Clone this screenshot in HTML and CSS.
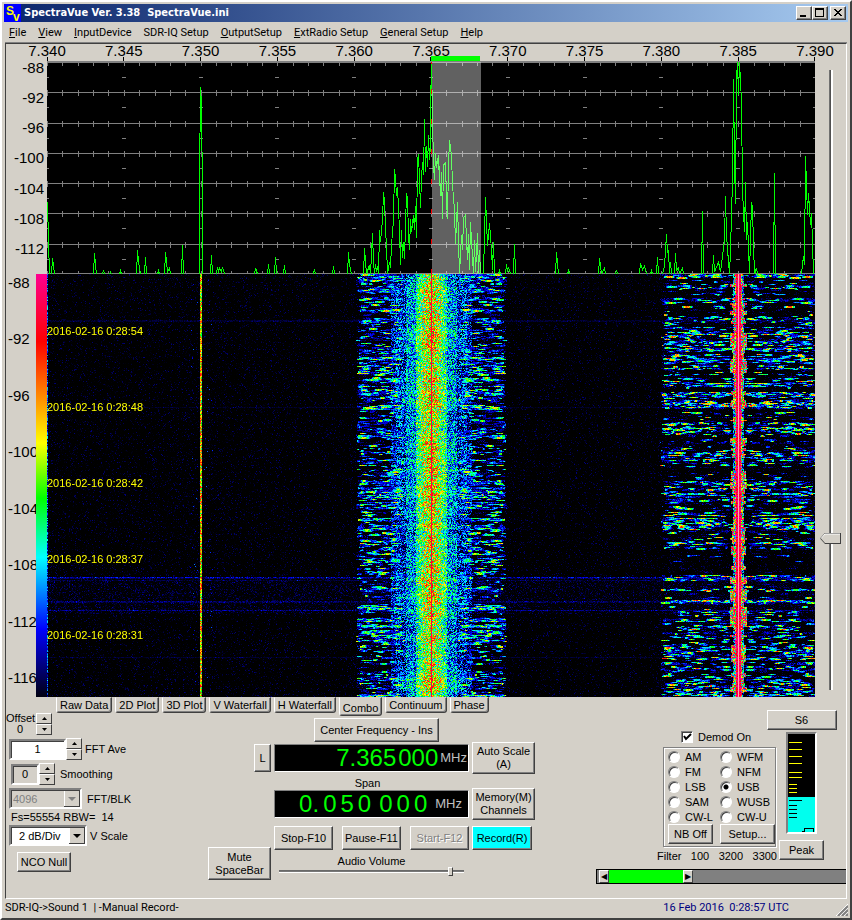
FILE: index.html
```
<!DOCTYPE html>
<html lang="en">
<head>
    <meta charset="UTF-8">
    <meta name="viewport" content="width=device-width, initial-scale=1.0">
    <title>SpectraVue Ver. 3.38</title>
    <link rel="stylesheet" href="styles.css">
</head>
<body>
    <div class="window">
        <header class="title-bar">
            <svg class="app-icon" width="17" height="18" viewBox="0 0 17 18">
                <rect width="17" height="18" fill="#0000ff" />
                <text x="2" y="11" fill="#ffff00" font-size="12">S</text>
                <text x="9" y="17" fill="#ffff00" font-size="12">v</text>
            </svg>
            <h1>SpectraVue Ver. 3.38&nbsp; SpectraVue.ini</h1>
            <div class="window-buttons">
                <button type="button" aria-label="Minimize">
                    <svg width="12" height="10" viewBox="0 0 12 10"><path d="M2 7h6v2H2z" /></svg>
                </button>
                <button type="button" aria-label="Maximize">
                    <svg width="12" height="10" viewBox="0 0 12 10"><path fill-rule="evenodd" d="M1 0h9v9H1zM2 2v6h7V2z" /></svg>
                </button>
                <button type="button" class="close" aria-label="Close">
                    <svg width="12" height="10" viewBox="0 0 12 10"><path d="M2 1h2v1h1v1h2V2h1V1h2v1H9v1H8v1H7v1h1v1h1v1h1v1H8V7H7V6H5v1H4v1H2V7h1V6h1V5h1V4H4V3H3V2H2z" /></svg>
                </button>
            </div>
        </header>

        <nav class="menu">
            <a href="#"><u>F</u>ile</a>
            <a href="#"><u>V</u>iew</a>
            <a href="#"><u>I</u>nputDevice</a>
            <a href="#">SDR-IQ Setup</a>
            <a href="#"><u>O</u>utputSetup</a>
            <a href="#"><u>E</u>xtRadio Setup</a>
            <a href="#"><u>G</u>eneral Setup</a>
            <a href="#"><u>H</u>elp</a>
        </nav>

        <main class="client">
            <div class="display">
                <div class="plots">
                    <div class="freq-axis">
                        <span>7.340</span><span>7.345</span><span>7.350</span><span>7.355</span>
                        <span>7.360</span><span>7.365</span><span>7.370</span><span>7.375</span>
                        <span>7.380</span><span>7.385</span><span>7.390</span>
                        <div class="passband"></div>
                    </div>
                    <div class="db-axis">
                        <span>-88</span><span>-92</span><span>-96</span><span>-100</span>
                        <span>-104</span><span>-108</span><span>-112</span>
                    </div>
                    <svg class="spectrum" viewBox="0 0 768 212" preserveAspectRatio="none">
                        <path id="grid" class="grid" />
                        <polyline id="trace" class="trace" />
                        <rect class="band" x="385" y="0" width="49" height="212" />
                        <path class="tune" d="M384.500 0V212" />
                    </svg>
                    <div class="color-axis">
                        <div class="color-labels">
                            <span>-88</span><span>-92</span><span>-96</span><span>-100</span>
                            <span>-104</span><span>-108</span><span>-112</span><span>-116</span>
                        </div>
                        <div class="color-bar"></div>
                    </div>
                    <div class="waterfall">
                        <canvas id="waterfall" width="768" height="423"></canvas>
                        <div class="stamps">
                            <span>2016-02-16 0:28:54</span>
                            <span>2016-02-16 0:28:48</span>
                            <span>2016-02-16 0:28:42</span>
                            <span>2016-02-16 0:28:37</span>
                            <span>2016-02-16 0:28:31</span>
                        </div>
                    </div>
                </div>
                <input class="level-slider" type="range" min="0" max="100" value="76" aria-label="Level">
            </div>

            <div class="tabs">
                <button type="button">Raw Data</button>
                <button type="button">2D Plot</button>
                <button type="button">3D Plot</button>
                <button type="button">V Waterfall</button>
                <button type="button">H Waterfall</button>
                <button type="button" class="active">Combo</button>
                <button type="button">Continuum</button>
                <button type="button">Phase</button>
            </div>

            <div class="controls">
                <section class="fft">
                    <div class="field offset">
                        <div class="offset-text">Offset<br>0</div>
                        <div class="spin"><button type="button" aria-label="Offset up"></button><button type="button" class="down" aria-label="Offset down"></button></div>
                    </div>
                    <div class="field ave">
                        <input id="ave" type="text" value="1">
                        <div class="spin"><button type="button" aria-label="Average up"></button><button type="button" class="down" aria-label="Average down"></button></div>
                        <label for="ave">FFT Ave</label>
                    </div>
                    <div class="field smoothing">
                        <input id="smooth" type="text" value="0">
                        <div class="spin"><button type="button" aria-label="Smoothing up"></button><button type="button" class="down" aria-label="Smoothing down"></button></div>
                        <label for="smooth">Smoothing</label>
                    </div>
                    <div class="field block">
                        <select id="blk" disabled><option>4096</option></select>
                        <label for="blk">FFT/BLK</label>
                    </div>
                    <p class="rbw">Fs=55554 RBW=&nbsp; 14</p>
                    <div class="field scale">
                        <select id="vscale"><option>2 dB/Div</option></select>
                        <label for="vscale">V Scale</label>
                    </div>
                    <button type="button" class="btn nco">NCO Null</button>
                </section>

                <section class="tuning">
                    <button type="button" class="btn center-btn">Center Frequency - Ins</button>
                    <button type="button" class="btn lock-btn">L</button>
                    <div class="lcd lcd-center"><span>7.365</span><span>000</span><small>MHz</small></div>
                    <button type="button" class="btn scale-btn">Auto Scale<br>(A)</button>
                    <p class="span-label">Span</p>
                    <div class="lcd lcd-span">
                        <div class="digits"><span>0.</span><span>0</span><span>5</span><span>0</span></div>
                        <div class="digits"><span>0</span><span>0</span><span>0</span></div>
                        <small>MHz</small>
                    </div>
                    <button type="button" class="btn">Memory(M)<br>Channels</button>
                    <div class="run">
                        <button type="button" class="btn">Stop-F10</button>
                        <button type="button" class="btn">Pause-F11</button>
                        <button type="button" class="btn" disabled>Start-F12</button>
                    </div>
                    <button type="button" class="btn record">Record(R)</button>
                    <button type="button" class="btn mute">Mute<br>SpaceBar</button>
                    <div class="volume">
                        <label for="vol">Audio Volume</label>
                        <input id="vol" type="range" min="0" max="100" value="94">
                    </div>
                </section>

                <section class="demod">
                    <div class="demod-top">
                        <div class="demod-left">
                            <label class="demod-on"><input type="checkbox" checked> Demod On</label>
                            <div class="modes">
                                <label><input type="radio" name="mode"> AM</label>
                                <label><input type="radio" name="mode"> WFM</label>
                                <label><input type="radio" name="mode"> FM</label>
                                <label><input type="radio" name="mode"> NFM</label>
                                <label><input type="radio" name="mode"> LSB</label>
                                <label><input type="radio" name="mode" checked> USB</label>
                                <label><input type="radio" name="mode"> SAM</label>
                                <label><input type="radio" name="mode"> WUSB</label>
                                <label><input type="radio" name="mode"> CW-L</label>
                                <label><input type="radio" name="mode"> CW-U</label>
                                <button type="button" class="btn">NB Off</button>
                                <button type="button" class="btn">Setup...</button>
                            </div>
                            <div class="filter-text"><span>Filter</span><span>100</span><span>3200</span><span>3300</span></div>
                        </div>
                        <div class="meter">
                            <button type="button" class="btn s-btn">S6</button>
                            <svg class="s-meter" width="27" height="98" viewBox="0 0 27 98">
                                <rect width="27" height="98" fill="#000000" />
                                <rect y="63" width="27" height="35" fill="#00ffee" />
                                <path stroke="#ffff00" d="M1 8.500h13M1 15.500h13M1 22.500h13M1 29.500h13M1 38.500h13M1 43.500h13M1 50.500h8M1 54.500h8M1 58.500h8" />
                                <path stroke="#000000" fill="none" d="M1 66.500h13M1 71.500h8M1 75.500h8M1 79.500h8M1 83.500h8M14 97.500h2.500v-3h9v3" />
                            </svg>
                            <button type="button" class="btn peak">Peak</button>
                        </div>
                    </div>
                    <div class="filter-bar">
                        <button type="button" aria-label="Filter low edge">◀</button>
                        <div class="filter-pass"></div>
                        <button type="button" aria-label="Filter high edge">▶</button>
                    </div>
                </section>
            </div>
        </main>

        <footer class="status">
            <span>SDR-IQ-&gt;Sound 1&nbsp; | -Manual Record-</span>
            <time>16 Feb 2016&nbsp; 0:28:57 UTC</time>
            <svg class="grip" width="12" height="12" viewBox="0 0 12 12">
                <path stroke="#ffffff" d="M0 12L12 0M4 12L12 4M8 12L12 8" />
                <path stroke="#808080" stroke-width="2" d="M2 12L12 2M6 12L12 6M10 12L12 10" />
            </svg>
        </footer>
    </div>
    <script src="script.js"></script>
</body>
</html>
```
FILE: styles.css
```
* {
    box-sizing: border-box;
}

body {
    margin: 0;
    background-color: #d4d0c8;
    color: #000000;
    font-family: "Liberation Sans", Arial, sans-serif;
    font-size: 11px;
    line-height: 12px;
}

h1, p {
    margin: 0;
}

button, input, select {
    font: inherit;
    color: inherit;
    margin: 0;
    padding: 0;
}

.window {
    border: 2px solid;
    border-color: #ffffff #404040 #404040 #ffffff;
    padding: 2px;
}

/* title bar */
.title-bar {
    display: flex;
    align-items: center;
    height: 18px;
    background: linear-gradient(to right, #0a246a, #a6caf0);
    color: #ffffff;
}

.app-icon {
    font-family: "Liberation Sans", Arial, sans-serif;
    font-weight: bold;
}

.title-bar h1 {
    flex: 1;
    margin-left: 3px;
    font-family: "DejaVu Sans Condensed", "DejaVu Sans", sans-serif;
    font-size: 11px;
    font-weight: bold;
}

.window-buttons {
    display: flex;
    padding-right: 2px;
}

.window-buttons button {
    width: 16px;
    height: 14px;
    background-color: #d4d0c8;
    border: 1px solid;
    border-color: #ffffff #404040 #404040 #ffffff;
    box-shadow: inset -1px -1px #808080;
}

.window-buttons svg {
    display: block;
    margin-left: 1px;
}

.window-buttons .close {
    margin-left: 2px;
}

/* menu */
.menu {
    display: flex;
    gap: 12px;
    padding: 4px 5px 2px;
    font-family: Roboto, sans-serif;
    line-height: 14px;
}

.menu a {
    color: #000000;
    text-decoration: none;
}

.client {
    border: 1px solid;
    border-color: #404040 #ffffff #ffffff #404040;
    box-shadow: 0 -1px #808080;
    margin: 1px 1px 0 1px;
}

/* plots */
.display {
    display: flex;
}

.plots {
    flex: 1;
    display: grid;
    grid-template-columns: 41px 1fr;
    grid-template-rows: 18px 212px 423px;
    font-size: 15px;
}

.freq-axis {
    grid-column: 2;
    position: relative;
    display: flex;
    justify-content: space-between;
    border-bottom: 1px solid #808080;
}

.freq-axis span {
    display: flex;
    flex-direction: column;
    align-items: center;
    width: 0;
    line-height: 13px;
}

.freq-axis span::after {
    content: "";
    width: 1px;
    height: 4px;
    background-color: #000000;
}

.passband {
    position: absolute;
    left: 50%;
    bottom: 0;
    width: 6.4%;
    height: 5px;
    background-color: #00ff00;
}

.db-axis {
    display: flex;
    flex-direction: column;
    justify-content: space-between;
    align-items: flex-end;
    padding: 0 3px 19px 0;
    line-height: 12px;
}

.spectrum {
    width: 100%;
    height: 212px;
    background-color: #000000;
    fill: none;
    shape-rendering: crispEdges;
}

.grid {
    stroke: #808080;
}

.trace {
    stroke: #00ff00;
}

.band {
    fill: #ffffff;
    fill-opacity: 0.38;
}

.tune {
    stroke: #ff0000;
    stroke-dasharray: 5 25;
    stroke-dashoffset: 3;
}

.color-axis {
    display: flex;
    justify-content: space-between;
    padding-left: 2px;
}

.color-labels {
    display: flex;
    flex-direction: column;
    justify-content: space-between;
    width: 28px;
    padding: 3px 0 13px;
}

.color-bar {
    width: 11px;
    background: linear-gradient(#ff0090, #ff0000 16%, #ffff00 40%, #00ff00 53%, #00ffff 67%, #0000ff 84%, #000010);
}

.waterfall {
    position: relative;
    background-color: #000000;
}

.waterfall canvas {
    display: block;
    width: 100%;
    height: 423px;
}

.stamps {
    position: absolute;
    top: 51px;
    left: 0;
    display: flex;
    flex-direction: column;
    gap: 64px;
    color: #ffff00;
    font-size: 11px;
}

.level-slider {
    appearance: none;
    writing-mode: vertical-lr;
    width: 21px;
    height: 620px;
    margin: 26px 5px 0 5px;
    background: linear-gradient(to right, transparent 9px, #808080 9px, #404040 11px, #ffffff 11px, #ffffff 13px, transparent 13px);
}

.level-slider::-webkit-slider-thumb {
    appearance: none;
    width: 21px;
    height: 11px;
    background: url("data:image/svg+xml,%3Csvg xmlns='http://www.w3.org/2000/svg' width='21' height='11'%3E%3Cpath d='M0 5.500L5 0h16v11H5z' fill='%23404040'/%3E%3Cpath d='M1 5.500L5 1h15v9H5z' fill='%23d4d0c8'/%3E%3Cpath d='M1 5.500L5 1h15' fill='none' stroke='white'/%3E%3C/svg%3E");
}

/* tabs */
.tabs {
    display: flex;
    align-items: flex-start;
    gap: 3px;
    height: 13px;
    padding-left: 50px;
}

.tabs button {
    height: 16px;
    padding: 0 3px;
    background-color: #d4d0c8;
    border: 1px solid;
    border-color: transparent #404040 #404040 #ffffff;
    border-radius: 0 0 3px 3px;
    box-shadow: inset -1px -1px #808080;
}

.tabs .active {
    height: 19px;
    padding-top: 2px;
}

/* control panel */
.controls {
    display: flex;
    align-items: flex-start;
    height: 188px;
}

.btn {
    background-color: #d4d0c8;
    border: 1px solid;
    border-color: #ffffff #404040 #404040 #ffffff;
    box-shadow: inset -1px -1px #808080;
    line-height: 13px;
    white-space: nowrap;
}

.btn:disabled {
    color: #808080;
    text-shadow: 1px 1px #ffffff;
}

.fft {
    display: flex;
    flex-direction: column;
    align-items: flex-start;
    gap: 3px;
    width: 202px;
    padding: 3px 0 0 3px;
}

.field {
    display: flex;
    align-items: center;
}

.field label {
    margin-left: 3px;
}

.offset {
    gap: 2px;
    margin-left: -3px;
    line-height: 11px;
}

.offset-text {
    width: 28px;
    text-align: center;
}

.spin {
    display: flex;
    flex-direction: column;
}

.spin button {
    width: 16px;
    height: 11px;
    border: 1px solid;
    border-color: #ffffff #404040 #404040 #ffffff;
    background: #d4d0c8 url("data:image/svg+xml,%3Csvg xmlns='http://www.w3.org/2000/svg' width='5' height='3'%3E%3Cpath d='M0 3h5L2.500 0z'/%3E%3C/svg%3E") center no-repeat;
}

.spin .down {
    background-image: url("data:image/svg+xml,%3Csvg xmlns='http://www.w3.org/2000/svg' width='5' height='3'%3E%3Cpath d='M0 0h5L2.500 3z'/%3E%3C/svg%3E");
}

.field input, .field select {
    height: 21px;
    border: 2px solid;
    border-color: #808080 #ffffff #ffffff #808080;
    border-radius: 0;
    box-shadow: inset 1px 1px #404040;
    background-color: #ffffff;
}

.field input {
    text-align: center;
}

.ave input {
    width: 57px;
}

.smoothing {
    margin-left: 2px;
}

.field.smoothing label {
    margin-left: 5px;
}

.field.smoothing input {
    width: 28px;
    background-color: #d4d0c8;
}

.field select {
    appearance: none;
    padding-left: 8px;
    background: #ffffff url("data:image/svg+xml,%3Csvg xmlns='http://www.w3.org/2000/svg' width='16' height='17'%3E%3Cpath d='M0 0h16v17H0z' fill='%23404040'/%3E%3Cpath d='M0 0h15v16H0z' fill='white'/%3E%3Cpath d='M1 1h14v15H1z' fill='%23d4d0c8'/%3E%3Cpath d='M4 7h8l-4 4z'/%3E%3C/svg%3E") right no-repeat;
}

.field.block select {
    width: 73px;
    padding-left: 2px;
    background: #d4d0c8 url("data:image/svg+xml,%3Csvg xmlns='http://www.w3.org/2000/svg' width='16' height='17'%3E%3Cpath d='M0 0h16v17H0z' fill='%23404040'/%3E%3Cpath d='M0 0h15v16H0z' fill='white'/%3E%3Cpath d='M1 1h14v15H1z' fill='%23d4d0c8'/%3E%3Cpath d='M4 7h8l-4 4z' fill='%23808080'/%3E%3C/svg%3E") right no-repeat;
    color: #808080;
    opacity: 1;
}

.field.block label {
    margin-left: 5px;
}

.scale select {
    width: 78px;
}

.rbw {
    padding-left: 2px;
    line-height: 10px;
}

.nco {
    width: 54px;
    height: 20px;
    margin: 3px 0 0 8px;
}

.tuning {
    display: grid;
    grid-template-columns: 63px 195px 63px;
    grid-template-rows: 24px 32px 14px 32px 30px 30px;
    column-gap: 3px;
    padding-top: 8px;
}

.center-btn {
    grid-column: 2;
    width: 125px;
    margin-left: 40px;
}

.lock-btn {
    grid-column: 1;
    grid-row: 2;
    justify-self: end;
    align-self: center;
    width: 17px;
    height: 28px;
}

.lcd {
    grid-column: 2;
    align-self: center;
    display: flex;
    justify-content: flex-end;
    align-items: center;
    gap: 3px;
    height: 28px;
    padding-right: 1px;
    background-color: #000000;
    border: 1px solid;
    border-color: #808080 #ffffff #ffffff #808080;
    color: #00ff00;
    font-size: 24px;
}

.lcd small {
    color: #c0c0c0;
    font-size: 13px;
}

.lcd-center {
    grid-row: 2;
    gap: 2px;
}

.scale-btn {
    grid-column: 3;
    grid-row: 2;
}

.span-label {
    grid-column: 2;
    padding-top: 3px;
    padding-right: 8px;
    text-align: center;
}

.lcd-span {
    gap: 8px;
    padding-right: 6px;
}

.digits {
    display: flex;
    gap: 4px;
}

.run {
    grid-column: 2;
    display: flex;
    justify-content: space-between;
    align-items: flex-end;
}

.run .btn {
    width: 59px;
    height: 24px;
}

.record {
    align-self: end;
    width: 60px;
    height: 24px;
    background-color: #00ffff;
}

.mute {
    grid-column: 1;
    grid-row: 5 / 7;
    align-self: end;
    height: 33px;
}

.volume {
    display: flex;
    flex-direction: column;
    align-items: center;
    padding: 5px 5px 0;
}

.volume input {
    appearance: none;
    width: 100%;
    height: 9px;
    background: linear-gradient(transparent 3px, #606060 3px, #808080 5px, #ffffff 5px, #ffffff 6px, transparent 6px);
}

.volume input::-webkit-slider-thumb {
    appearance: none;
    width: 5px;
    height: 9px;
    background-color: #d4d0c8;
    border: 1px solid;
    border-color: #ffffff #404040 #404040 #ffffff;
}

.demod {
    margin-left: auto;
    width: 250px;
}

.demod-top {
    display: flex;
    justify-content: flex-end;
    gap: 3px;
    padding-right: 22px;
}

.demod-left {
    width: 113px;
    padding-top: 21px;
}

.demod-left label {
    display: flex;
    align-items: center;
    gap: 5px;
}

.demod-left input {
    appearance: none;
    width: 12px;
    height: 12px;
    background-color: #ffffff;
    border: 1px solid;
    border-color: #808080 #ffffff #ffffff #808080;
    box-shadow: inset 1px 1px #404040;
}

.demod-left .demod-on {
    padding-left: 18px;
}

.demod-on input:checked {
    background-image: url("data:image/svg+xml,%3Csvg xmlns='http://www.w3.org/2000/svg' width='10' height='10'%3E%3Cpath d='M2 4l2 3l5-5' fill='none' stroke='black' stroke-width='2'/%3E%3C/svg%3E");
}

.modes {
    display: grid;
    grid-template-columns: 52px 55px;
    grid-template-rows: repeat(5, 15px) 20px;
    margin-top: 4px;
    padding: 1px 0 2px 4px;
    border: 1px solid #808080;
    box-shadow: 1px 1px #ffffff, inset 1px 1px #ffffff;
}

.modes input {
    border-radius: 50%;
}

.modes input:checked {
    background-image: radial-gradient(#000000 2px, #ffffff 3px);
}

.modes .btn {
    height: 20px;
    width: 45px;
}

.modes .btn:last-child {
    width: 55px;
}

.filter-text {
    display: flex;
    justify-content: space-between;
    margin: 3px -1px 3px -6px;
}

.meter {
    display: flex;
    flex-direction: column;
    align-items: center;
    width: 45px;
}

.s-btn {
    width: 70px;
    height: 20px;
}

.s-meter {
    box-sizing: content-box;
    margin: 2px 0 6px;
    border: 2px solid;
    border-color: #808080 #ffffff #ffffff #808080;
    shape-rendering: crispEdges;
}

.peak {
    width: 45px;
    height: 20px;
}

.filter-bar {
    display: flex;
    height: 15px;
    margin-top: 4px;
    padding-left: 2px;
    background-color: #808080;
    border: 1px solid #000000;
    border-right: 0;
}

.filter-bar button {
    width: 10px;
    background-color: #d4d0c8;
    border: 1px solid;
    border-color: #ffffff #404040 #404040 #ffffff;
    font-size: 8px;
    line-height: 10px;
}

.filter-pass {
    width: 30%;
    background-color: #00ff00;
}

/* status bar */
.status {
    display: flex;
    align-items: center;
    height: 17px;
    padding: 1px 0 0 1px;
    font-family: Roboto, sans-serif;
}

.status time {
    margin-left: auto;
    padding-right: 47px;
    color: #000080;
}

.grip {
    align-self: flex-end;
}
```
FILE: script.js
```
const W = 768;
const H = 423;

// small seeded generator so the display is the same on every load
let seed = 7365;
function rand() {
    seed = (seed * 1664525 + 1013904223) % 4294967296;
    return seed / 4294967296;
}

// grid: 10 frequency divisions, 7 level divisions
function drawGrid() {
    let d = '';
    for (let row = 0; row <= 7; row++) {
        const y = Math.min(Math.round(row * 212 / 7), 211) + 0.5;
        d += `M0 ${y}H768`;
        for (let i = 0; i <= 50; i++) {
            d += `M${Math.round(i * 15.36) + 0.5} ${y - 3}v6`;
        }
        for (let i = 0; i <= 10; i++) {
            d += `M${Math.round(i * 76.8) - 2} ${y + 15}h4`;
        }
    }
    document.getElementById('grid').setAttribute('d', d);
}

// level of each point in pixels above the floor
const trace = [
    [0, 72], [1, 34], [2, 0], [4, 0], [5, 16], [7, 0], [46, 0], [47, 21], [48, 9], [49, 0], [55, 0], [56, 4], [57, 0],
    [62, 0], [63, 2], [64, 0], [72, 0], [73, 3], [74, 0], [89, 0], [90, 24], [91, 12], [92, 6], [93, 0], [97, 0], [98, 17],
    [99, 0], [110, 0], [111, 3], [112, 0], [117, 0], [118, 22], [120, 2], [122, 6], [123, 0], [134, 0], [135, 29], [136, 0],
    [152, 0], [152, 93], [153, 187], [154, 170], [155, 78], [155, 0], [163, 0], [164, 19], [165, 0], [169, 0], [170, 7],
    [171, 3], [172, 6], [174, 2], [175, 7], [177, 0], [207, 0], [208, 6], [210, 0], [220, 0], [221, 10], [222, 0], [227, 0],
    [228, 17], [229, 2], [230, 0], [236, 0], [237, 9], [238, 0], [266, 0], [267, 5], [268, 0], [285, 0], [286, 8], [287, 0],
    [300, 0], [301, 22], [302, 9], [304, 0], [316, 0], [317, 26], [319, 0], [322, 9], [323, 0], [325, 41], [326, 12],
    [327, 0], [328, 10], [329, 2], [330, 8], [331, 0], [332, 44], [333, 32], [335, 54], [336, 82], [337, 72], [338, 44],
    [339, 29], [340, 0], [342, 12], [343, 6], [344, 29], [346, 54], [347, 105], [348, 96], [349, 78], [350, 87], [352, 44],
    [353, 9], [354, 44], [355, 16], [356, 32], [357, 15], [358, 49], [359, 81], [360, 76], [361, 39], [362, 24], [363, 55],
    [364, 42], [366, 59], [367, 44], [368, 68], [369, 36], [370, 114], [371, 120], [372, 94], [373, 66], [374, 96],
    [375, 112], [376, 99], [377, 155], [378, 102], [379, 128], [380, 107], [381, 139], [382, 114], [383, 129], [383, 164],
    [384, 212], [385, 157], [386, 109], [387, 94], [388, 121], [389, 106], [390, 116], [391, 104], [391, 119], [393, 78],
    [394, 102], [395, 55], [396, 109], [398, 111], [399, 74], [400, 55], [401, 109], [402, 134], [403, 126], [404, 119],
    [405, 89], [407, 64], [408, 30], [410, 72], [411, 34], [412, 0], [414, 39], [415, 24], [416, 56], [418, 59], [419, 34],
    [420, 14], [421, 40], [422, 4], [423, 52], [424, 34], [426, 0], [427, 34], [428, 2], [430, 41], [431, 0], [432, 24],
    [433, 0], [436, 0], [438, 77], [440, 28], [442, 51], [444, 24], [445, 4], [446, 32], [447, 0], [451, 0], [452, 3],
    [453, 0], [458, 0], [459, 10], [460, 2], [461, 7], [463, 0], [466, 0], [467, 30], [468, 0], [508, 0], [509, 22],
    [511, 0], [520, 0], [521, 3], [522, 0], [551, 0], [552, 16], [554, 0], [557, 6], [558, 0], [568, 0], [569, 4], [570, 0],
    [592, 0], [593, 11], [595, 4], [597, 8], [599, 0], [603, 0], [604, 3], [605, 0], [609, 0], [610, 17], [611, 0],
    [615, 0], [617, 8], [619, 40], [620, 22], [621, 24], [622, 0], [623, 12], [624, 0], [627, 0], [628, 21], [629, 4],
    [631, 6], [632, 0], [635, 6], [636, 0], [654, 0], [655, 63], [656, 0], [665, 0], [666, 19], [667, 2], [671, 12],
    [673, 2], [677, 34], [678, 78], [679, 39], [681, 12], [682, 0], [683, 24], [685, 94], [686, 195], [687, 112],
    [688, 70], [689, 196], [690, 212], [691, 179], [692, 212], [694, 173], [695, 84], [697, 42], [698, 92], [699, 34],
    [700, 52], [702, 0], [704, 72], [705, 67], [706, 29], [707, 0], [709, 6], [710, 0], [726, 0], [727, 101], [728, 0],
    [754, 0], [756, 18], [757, 9], [758, 118], [759, 89], [760, 59], [761, 81], [763, 49], [764, 61], [766, 0], [768, 0]
];

function drawTrace() {
    const points = trace.map(([x, level]) => `${x + 0.5},${212 - level}`).join(' ');
    document.getElementById('trace').setAttribute('points', points);
}

// same stops as the colour bar
const stops = [
    [0, 0, 0, 0], [0.16, 0, 0, 255], [0.33, 0, 255, 255], [0.47, 0, 255, 0],
    [0.6, 255, 255, 0], [0.84, 255, 0, 0], [1, 255, 0, 144]
];

function color(v) {
    v = Math.max(0, Math.min(1, v));
    let i = 1;
    while (i < stops.length - 1 && v > stops[i][0]) i++;
    const a = stops[i - 1];
    const b = stops[i];
    const t = (v - a[0]) / (b[0] - a[0]);
    return [1, 2, 3].map(k => a[k] + (b[k] - a[k]) * t);
}

const level = new Float32Array(W * H);

function raise(x, y, v) {
    x = Math.round(x);
    if (x < 0 || x >= W || y < 0 || y >= H) return;
    level[y * W + x] = Math.max(level[y * W + x], v);
}

// talk bursts, mirrored in both sidebands
function sidebands(center, inner, outer, count, quiet, strength) {
    const busy = [];
    let current = 0.5;
    for (let y = 0; y < H; y++) {
        if (rand() < 0.4) current = 0.08 + Math.pow(rand(), 2) * 0.8;
        busy.push(quiet(y) ? 0.02 : current);
    }
    for (let n = 0; n < count; n++) {
        const y = Math.floor(rand() * H);
        if (rand() > busy[y]) continue;
        const start = inner + rand() * (outer - inner);
        const edge = outer - rand() * 5;
        const length = 2 + rand() * 10;
        const peak = 0.05 + Math.pow(rand(), 3) * strength;
        const thick = rand() < 0.25 ? 2 : 1;
        for (let i = 0; i < length && start + i < edge; i++) {
            const shape = peak * (0.3 + 0.7 * Math.sin(Math.PI * i / length));
            for (let k = 0; k < thick; k++) {
                raise(center + start + i, y + k, shape + (rand() - 0.5) * 0.2);
                raise(center - start - i, y + k, shape + (rand() - 0.5) * 0.2);
            }
        }
    }
}

function drawWaterfall() {
    const ctx = document.getElementById('waterfall').getContext('2d');
    const image = ctx.createImageData(W, H);
    const hot = { 46: 0.05, 47: 0.05, 133: 0.04, 303: 0.2, 304: 0.08, 306: 0.06, 327: 0.1, 328: 0.07, 336: 0.12, 383: 0.05 };

    for (let y = 0; y < H; y++) {
        for (let x = 0; x < W; x++) {
            let v = Math.pow(rand(), 16) * 0.08;
            if (hot[y]) v += rand() * hot[y];
            if (y > 303 && y < 340) v += Math.pow(rand(), 9) * 0.08;
            level[y * W + x] = v;
        }
        raise(0, y, rand() * 0.34);
        if (rand() < 0.1) raise(143 + rand() * 8, y, 0.08 + rand() * 0.16);
        if (rand() < 0.1) raise(157 + rand() * 8, y, 0.08 + rand() * 0.16);
    }

    sidebands(384, 26, 75, 7600, y => false, 0.62);
    sidebands(691, 5, 78, 8800, y => (y > 276 && y < 301) || (y > 193 && y < 200) || (y > 112 && y < 118), 0.75);

    let drift = 0;
    let width = 5;
    for (let y = 0; y < H; y++) {
        drift = drift * 0.8 + (rand() - 0.5) * 0.08;

        // wide signal on 7.365
        for (let d = -40; d <= 40; d++) {
            const a = Math.abs(d);
            let base = 0.07;
            if (a < 16) base = 0.63 - a * 0.013;
            else if (a < 26) base = 0.26;
            else if (a < 36) base = 0.14;
            if (a > 9 && a < 16) base -= 0.04;
            const spread = a < 10 ? 0.52 : 0.42;
            raise(384 + d, y, base + drift + (rand() - 0.5) * spread);
        }

        // strong carrier on 7.385
        if (rand() < 0.25) width = 3 + rand() * 6;
        for (let d = -9; d <= 9; d++) {
            const a = Math.abs(d);
            if (a < 3) raise(691 + d, y, 0.8 + rand() * 0.3);
            else if (a < width) raise(691 + d, y, 0.2 + rand() * 0.9);
            else if (a < 6) raise(691 + d, y, rand() * 0.45);
        }

        // narrow carrier on 7.350
        raise(153, y, 0.45 + rand() * 0.45);
        raise(154, y, 0.35 + rand() * 0.5);
    }

    for (let i = 0; i < W * H; i++) {
        const c = color(level[i]);
        image.data[i * 4] = c[0];
        image.data[i * 4 + 1] = c[1];
        image.data[i * 4 + 2] = c[2];
        image.data[i * 4 + 3] = 255;
    }
    ctx.putImageData(image, 0, 0);
    ctx.fillStyle = '#ff0040';
    ctx.fillRect(384, 0, 1, H);
    ctx.fillStyle = '#ffb0a0';
    ctx.fillRect(691, 0, 1, H);
}

drawGrid();
drawTrace();
drawWaterfall();
```
